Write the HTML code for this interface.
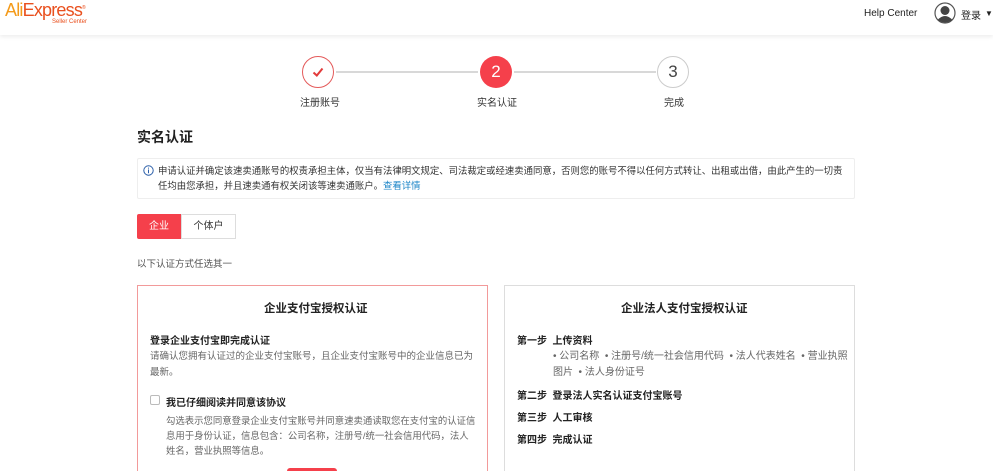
<!DOCTYPE html>
<html><head><meta charset="utf-8"><style>
*{margin:0;padding:0;box-sizing:border-box}
html,body{width:993px;height:471px;overflow:hidden}
body{background:#fff;font-family:"Liberation Sans","Noto Sans CJK SC",sans-serif;color:#333;position:relative}
.a{position:absolute;white-space:nowrap}
.hdr{position:absolute;left:0;top:0;width:993px;height:35px;background:#fff;box-shadow:0 2px 4px rgba(0,0,0,.07)}
.c{position:absolute;width:32px;height:32px;border-radius:50%;text-align:center;line-height:30px;font-size:17px}
.ln{position:absolute;height:2px;background:#d8d8d8;top:71px}
.lbl{font-size:10px;color:#333}
.card{position:absolute;top:285px;height:200px;background:#fff}
.b{font-weight:bold;color:#222}
.g{color:#666;font-size:10px}
</style></head><body>
<div class="hdr">
<div class="a" style="left:5px;top:0px;font-size:18px;letter-spacing:-0.8px;color:#e9501e"><span style="color:#f49b1b">Ali</span>Express<sup style="font-size:5px">®</sup></div>
<div class="a" style="left:52px;top:19px;font-size:6px;color:#e9501e">Seller Center</div>
<div class="a" style="left:864px;top:8px;font-size:10px;color:#222">Help Center</div>
<svg class="a" style="left:934px;top:2px" width="22" height="22" viewBox="0 0 22 22"><circle cx="11" cy="11" r="10" fill="#fff" stroke="#555" stroke-width="1.2"/><circle cx="11" cy="8.5" r="4.5" fill="#444"/><path d="M3.5 18 Q11 10 18.5 18 Q11 23 3.5 18Z" fill="#444"/></svg>
<div class="a" style="left:961px;top:7px;font-size:10px;color:#222">登录</div>
<div class="a" style="left:985px;top:9px;font-size:8px;color:#222">▼</div>
</div>
<div class="ln" style="left:336px;width:142px"></div>
<div class="ln" style="left:514px;width:142px"></div>
<div class="c" style="left:302px;top:56px;border:1.5px solid #e45a5a;color:#e23b3b">
<svg width="14" height="14" viewBox="0 0 14 14" style="margin-top:8px"><path d="M2.5 7.5 L5.8 10.5 L11.5 3.5" fill="none" stroke="#e23b3b" stroke-width="2"/></svg></div>
<div class="c" style="left:480px;top:56px;background:#f5404b;color:#fff;line-height:32px">2</div>
<div class="c" style="left:657px;top:56px;border:1px solid #ccc;color:#444">3</div>
<div class="a lbl" style="left:300px;top:94px">注册账号</div>
<div class="a lbl" style="left:477px;top:94px">实名认证</div>
<div class="a lbl" style="left:664px;top:94px">完成</div>
<div class="a b" style="left:137px;top:127px;font-size:14px">实名认证</div>
<div class="a" style="left:137px;top:158px;width:718px;height:41px;border:1px solid #eee;border-radius:2px"></div>
<svg class="a" style="left:143px;top:165px" width="11" height="11" viewBox="0 0 11 11"><circle cx="5.5" cy="5.5" r="4.7" fill="none" stroke="#2a5ea8" stroke-width="1"/><path d="M5.5 4.5V8.2M5.5 2.6v1" stroke="#2a5ea8" stroke-width="1"/></svg>
<div class="a" style="left:158px;top:163px;font-size:9.4px;line-height:15px;color:#333;white-space:normal;width:692px">申请认证并确定该速卖通账号的权责承担主体，仅当有法律明文规定、司法裁定或经速卖通同意，否则您的账号不得以任何方式转让、出租或出借，由此产生的一切责任均由您承担，并且速卖通有权关闭该等速卖通账户。<span style="color:#1a84c7">查看详情</span></div>
<div class="a" style="left:137px;top:214px;width:44px;height:25px;background:#f5404b;color:#fff;font-size:10px;text-align:center;line-height:25px;border-radius:2px 0 0 2px">企业</div>
<div class="a" style="left:181px;top:214px;width:55px;height:25px;border:1px solid #ddd;font-size:10px;text-align:center;line-height:23px;color:#333">个体户</div>
<div class="a" style="left:137px;top:256px;font-size:9.5px;color:#555">以下认证方式任选其一</div>
<div class="card" style="left:137px;width:351px;border:1px solid #f29a9a"></div>
<div class="card" style="left:504px;width:351px;border:1px solid #ddd"></div>
<div class="a b" style="left:264px;top:300px;font-size:11.5px">企业支付宝授权认证</div>
<div class="a b" style="left:150px;top:332px;font-size:10px">登录企业支付宝即完成认证</div>
<div class="a g" style="left:150px;top:349px;line-height:15.5px;font-size:9.5px">请确认您拥有认证过的企业支付宝账号，且企业支付宝账号中的企业信息已为<br>最新。</div>
<div class="a" style="left:150px;top:395px;width:10px;height:10px;border:1px solid #bbb;border-radius:2px"></div>
<div class="a b" style="left:166px;top:394px;font-size:10px">我已仔细阅读并同意该协议</div>
<div class="a g" style="left:166px;top:413px;line-height:15px;font-size:9.4px">勾选表示您同意登录企业支付宝账号并同意速卖通读取您在支付宝的认证信<br>息用于身份认证，信息包含：公司名称，注册号/统一社会信用代码，法人<br>姓名，营业执照等信息。</div>
<div class="a" style="left:287px;top:468px;width:50px;height:6px;background:#f5404b;border-radius:3px 3px 0 0"></div>
<div class="a b" style="left:621px;top:300px;font-size:11.5px">企业法人支付宝授权认证</div>
<div class="a b" style="left:517px;top:332px;font-size:10px">第一步&nbsp;&nbsp;上传资料</div>
<div class="a g" style="left:553px;top:349px;line-height:15.5px">• 公司名称 &nbsp;• 注册号/统一社会信用代码 &nbsp;• 法人代表姓名 &nbsp;• 营业执照<br>图片 &nbsp;• 法人身份证号</div>
<div class="a b" style="left:517px;top:387px;font-size:10px">第二步&nbsp;&nbsp;登录法人实名认证支付宝账号</div>
<div class="a b" style="left:517px;top:409px;font-size:10px">第三步&nbsp;&nbsp;人工审核</div>
<div class="a b" style="left:517px;top:431px;font-size:10px">第四步&nbsp;&nbsp;完成认证</div>
</body></html>
